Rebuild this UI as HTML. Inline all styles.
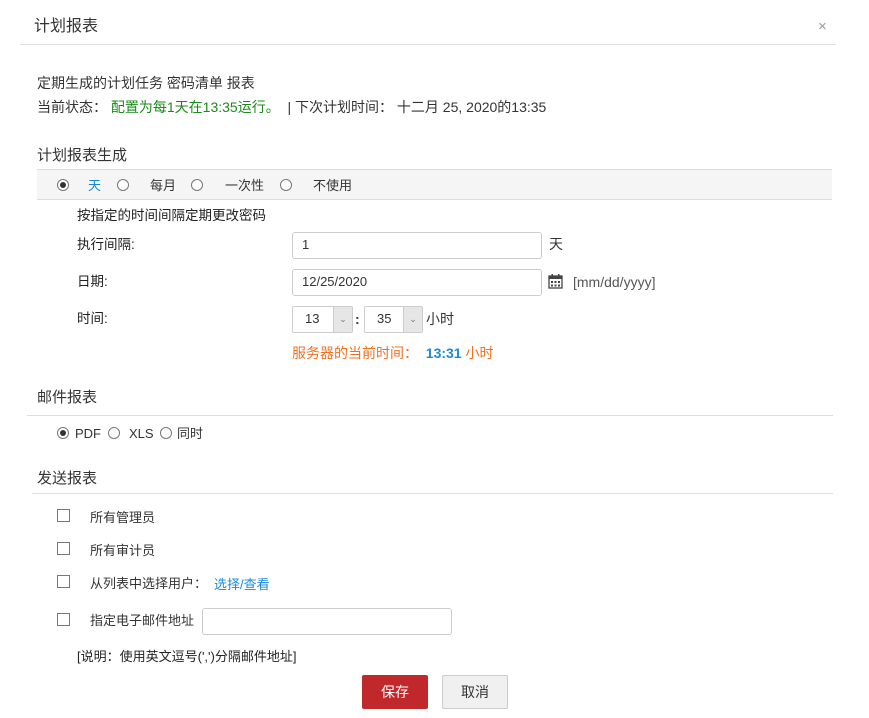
<!DOCTYPE html>
<html><head><meta charset="utf-8"><style>
body{margin:0;width:869px;height:718px;background:#fff;font-family:"Liberation Sans","Noto Sans CJK SC",sans-serif;color:#333;position:relative;overflow:hidden}
.a{position:absolute;white-space:nowrap;line-height:1}
.r{position:absolute;width:10px;height:10px;border:1px solid #777;border-radius:50%;background:#fff}
.r.on::after{content:"";position:absolute;left:2px;top:2px;width:6px;height:6px;border-radius:50%;background:#333}
.cb{position:absolute;width:11px;height:11px;border:1px solid #777;background:#fff}
.in{position:absolute;border:1px solid #ccc;border-radius:3px;background:#fff;box-sizing:border-box;font-size:13px;padding-left:9px;line-height:24px}
.sel{position:absolute;border:1px solid #ccc;border-radius:2px;box-sizing:border-box;font-size:13px;line-height:24px;padding-left:12px;background:#fff}
.sel i{position:absolute;right:0;top:0;width:18px;height:100%;background:#e6e6e6;border-left:1px solid #ccc;font-style:normal;font-size:9px;text-align:center;color:#777;line-height:24px}
.hr{position:absolute;height:1px;background:#ddd}
</style></head><body>
<div class="a" style="left:34px;top:19px;font-size:16px;color:#333">计划报表</div>
<div class="a" style="left:818px;top:19px;font-size:15px;color:#999">×</div>
<div class="hr" style="left:20px;top:44px;width:816px"></div>

<div class="a" style="left:37px;top:76px;font-size:14px">定期生成的计划任务 密码清单 报表</div>
<div class="a" style="left:37px;top:100px;font-size:14px">当前状态：&nbsp;<span style="color:#1a8a1a">配置为每1天在13:35运行。</span>&nbsp; | 下次计划时间：&nbsp;十二月 25, 2020的13:35</div>

<div class="a" style="left:37px;top:148px;font-size:15px">计划报表生成</div>
<div style="position:absolute;left:37px;top:169px;width:795px;height:29px;background:#f5f5f5;border-top:1px solid #ddd;border-bottom:1px solid #ddd"></div>
<div class="r on" style="left:57px;top:179px"></div>
<div class="a" style="left:88px;top:179px;font-size:13px;color:#1a8ad8">天</div>
<div class="r" style="left:117px;top:179px"></div>
<div class="a" style="left:150px;top:179px;font-size:13px">每月</div>
<div class="r" style="left:191px;top:179px"></div>
<div class="a" style="left:225px;top:179px;font-size:13px">一次性</div>
<div class="r" style="left:280px;top:179px"></div>
<div class="a" style="left:313px;top:179px;font-size:13px">不使用</div>

<div class="a" style="left:77px;top:209px;font-size:13.5px;color:#222">按指定的时间间隔定期更改密码</div>
<div class="a" style="left:77px;top:238px;font-size:13.5px;color:#222">执行间隔:</div>
<div class="in" style="left:292px;top:232px;width:250px;height:27px">1</div>
<div class="a" style="left:549px;top:237px;font-size:14px">天</div>
<div class="a" style="left:77px;top:275px;font-size:13.5px;color:#222">日期:</div>
<div class="in" style="left:292px;top:269px;width:250px;height:27px">12/25/2020</div>
<svg style="position:absolute;left:548px;top:274px" width="16" height="15" viewBox="0 0 16 15"><rect x="1" y="2" width="13" height="12" fill="none" stroke="#444" stroke-width="1.3"/><rect x="1" y="2" width="13" height="3" fill="#444"/><rect x="3.5" y="0" width="1.5" height="3" fill="#444"/><rect x="10" y="0" width="1.5" height="3" fill="#444"/><g fill="#444"><rect x="3" y="7" width="2" height="2"/><rect x="6.5" y="7" width="2" height="2"/><rect x="10" y="7" width="2" height="2"/><rect x="3" y="10.5" width="2" height="2"/><rect x="6.5" y="10.5" width="2" height="2"/><rect x="10" y="10.5" width="2" height="2"/></g></svg>
<div class="a" style="left:573px;top:275px;font-size:14px;color:#555">[mm/dd/yyyy]</div>
<div class="a" style="left:77px;top:312px;font-size:13.5px;color:#222">时间:</div>
<div class="sel" style="left:292px;top:306px;width:61px;height:27px">13<i>&#8964;</i></div>
<div class="a" style="left:355px;top:312px;font-size:14px;font-weight:bold">:</div>
<div class="sel" style="left:364px;top:306px;width:59px;height:27px">35<i>&#8964;</i></div>
<div class="a" style="left:426px;top:312px;font-size:14px">小时</div>
<div class="a" style="left:292px;top:346px;font-size:14px;color:#f07020">服务器的当前时间：&nbsp; <b style="color:#1a8ad8">13:31</b> 小时</div>

<div class="a" style="left:37px;top:390px;font-size:15px">邮件报表</div>
<div class="hr" style="left:27px;top:415px;width:806px"></div>
<div class="r on" style="left:57px;top:427px"></div>
<div class="a" style="left:75px;top:427px;font-size:13px">PDF</div>
<div class="r" style="left:108px;top:427px"></div>
<div class="a" style="left:129px;top:427px;font-size:13px">XLS</div>
<div class="r" style="left:160px;top:427px"></div>
<div class="a" style="left:177px;top:427px;font-size:13px">同时</div>

<div class="a" style="left:37px;top:471px;font-size:15px">发送报表</div>
<div class="hr" style="left:32px;top:493px;width:801px"></div>
<div class="cb" style="left:57px;top:509px"></div>
<div class="a" style="left:90px;top:511px;font-size:13px">所有管理员</div>
<div class="cb" style="left:57px;top:542px"></div>
<div class="a" style="left:90px;top:544px;font-size:13px">所有审计员</div>
<div class="cb" style="left:57px;top:575px"></div>
<div class="a" style="left:90px;top:577px;font-size:13px">从列表中选择用户：</div>
<div class="a" style="left:214px;top:578px;font-size:13px;color:#1a8ad8">选择/查看</div>
<div class="cb" style="left:57px;top:613px"></div>
<div class="a" style="left:90px;top:614px;font-size:13px">指定电子邮件地址</div>
<div class="in" style="left:202px;top:608px;width:250px;height:27px"></div>
<div class="a" style="left:77px;top:650px;font-size:13px;color:#222">[说明：使用英文逗号(',')分隔邮件地址]</div>

<div style="position:absolute;left:362px;top:675px;width:66px;height:34px;background:#c0282b;border-radius:2px;color:#fff;font-size:14px;line-height:34px;text-align:center">保存</div>
<div style="position:absolute;left:442px;top:675px;width:64px;height:32px;background:#f0f0f0;border:1px solid #ccc;border-radius:2px;color:#333;font-size:14px;line-height:32px;text-align:center">取消</div>
</body></html>
